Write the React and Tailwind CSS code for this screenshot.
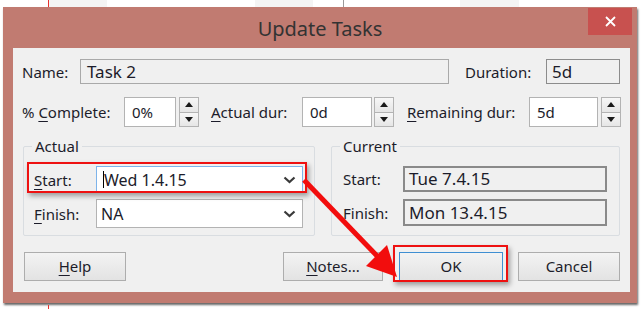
import React from "react";

const Label = ({ children, className = "" }) => (
  <span className={`text-[15px] leading-[20px] text-[#1c1c2a] whitespace-nowrap ${className}`}>
    {children}
  </span>
);

const Key = ({ children }) => (
  <span className="underline underline-offset-[3px] decoration-1">{children}</span>
);

const Spinner = ({ className = "" }) => (
  <div className={`w-[20px] h-[30px] flex flex-col border border-[#b3b3b3] ${className}`}>
    <div className="flex-1 flex items-center justify-center bg-gradient-to-b from-[#f7f7f7] to-[#e6e6e6] border-b border-[#b3b3b3]">
      <svg width="8" height="5" viewBox="0 0 8 5">
        <path d="M4 0L8 5H0z" fill="#1a1a1a" />
      </svg>
    </div>
    <div className="flex-1 flex items-center justify-center bg-gradient-to-b from-[#f7f7f7] to-[#e6e6e6]">
      <svg width="8" height="5" viewBox="0 0 8 5">
        <path d="M0 0H8L4 5z" fill="#1a1a1a" />
      </svg>
    </div>
  </div>
);

const Chevron = () => (
  <svg width="13" height="8" viewBox="0 0 13 8" className="mr-[6px]">
    <polyline points="1.5,1.5 6.5,6 11.5,1.5" fill="none" stroke="#3a3a3a" strokeWidth="2.2" />
  </svg>
);

const Button = ({ children, className = "" }) => (
  <div
    className={`h-[29px] flex items-center justify-center border bg-gradient-to-b from-[#f3f3f3] to-[#e3e3e3] text-[15px] text-[#1c1c2a] ${className}`}
  >
    {children}
  </div>
);

export default function App() {
  return (
    <div className="relative w-[644px] h-[310px] overflow-hidden bg-white font-['Noto_Sans',sans-serif]">
      {/* strip of the window behind */}
      <div className="flex h-[7px]">
        <div className="ml-[48px] w-[1px] bg-[#e8322d]" />
        <div className="w-[58px] bg-[#f4f4f4]" />
        <div className="ml-[148px] w-[58px] bg-[#f4f4f4]" />
        <div className="ml-[30px] w-[1px] bg-[#9a9a9a]" />
        <div className="ml-[116px] w-[59px] bg-[#f4f4f4]" />
      </div>

      {/* dialog */}
      <div className="ml-[3px] w-[634px] bg-[#c17b71] shadow-[1px_2px_2px_rgba(0,0,0,0.6)] pb-[11px]">
        <div className="h-[41px] grid grid-cols-[1fr_auto_1fr]">
          <div />
          <div className="self-center text-[20px] text-[#333] mt-[2px]">Update Tasks</div>
          <div className="flex justify-end items-start">
            <div className="mt-[1px] mr-[5px] w-[44px] h-[27px] bg-[#c8514f] flex items-center justify-center">
              <svg width="11" height="11" viewBox="0 0 11 11">
                <path d="M1 1L10 10M10 1L1 10" stroke="#fff" strokeWidth="1.8" />
              </svg>
            </div>
          </div>
        </div>

        <div className="ml-[10px] w-[617px] h-[244px] bg-[#f0f0f0] pt-[11px] flex flex-col">
          {/* name row */}
          <div className="flex items-center h-[25px]">
            <Label className="ml-[9px] w-[58px]">Name:</Label>
            <div className="w-[369px] h-[25px] border border-[#a9a9a9] flex items-center pl-[6px] text-[17px] text-[#1c1c2a]">
              Task 2
            </div>
            <Label className="ml-[16px] w-[81px]">Duration:</Label>
            <div className="w-[74px] h-[25px] border border-[#8c8c8c] flex items-center pl-[5px] text-[17px] text-[#1c1c2a]">
              5d
            </div>
          </div>

          {/* complete row */}
          <div className="mt-[13px] flex items-center h-[30px]">
            <Label className="ml-[9px] w-[102px]">
              % <Key>C</Key>omplete:
            </Label>
            <div className="w-[52px] h-[30px] border border-[#b3b3b3] bg-white flex items-center pl-[7px] text-[15px] text-[#1c1c2a]">
              0%
            </div>
            <Spinner className="ml-[3px]" />
            <Label className="ml-[12px] w-[91px]">
              <Key>A</Key>ctual dur:
            </Label>
            <div className="w-[70px] h-[30px] border border-[#b3b3b3] bg-white flex items-center pl-[7px] text-[15px] text-[#1c1c2a]">
              0d
            </div>
            <Spinner className="ml-[2px]" />
            <Label className="ml-[13px] w-[122px]">
              <Key>R</Key>emaining dur:
            </Label>
            <div className="w-[69px] h-[30px] border border-[#b3b3b3] bg-white flex items-center pl-[7px] text-[15px] text-[#1c1c2a]">
              5d
            </div>
            <Spinner className="ml-[3px]" />
          </div>

          {/* groups */}
          <div className="mt-[19px] flex">
            <div className="ml-[10px] w-[292px] h-[90px] border border-[#d9dde1] rounded-[2px] flex flex-col">
              <Label className="-mt-[11px] ml-[8px] px-[3px] w-fit bg-[#f0f0f0]">Actual</Label>
              <div className="mt-[10px] flex items-center h-[27px]">
                <Label className="ml-[10px] w-[62px]">
                  <Key>S</Key>tart:
                </Label>
                <div className="w-[207px] h-[27px] border border-[#7eb4ea] bg-white flex items-center justify-between pl-[6px] text-[16px] text-[#1c1c2a]">
                  <span className="flex items-center">
                    <span className="w-[1px] h-[17px] bg-black" />
                    Wed 1.4.15
                  </span>
                  <Chevron />
                </div>
              </div>
              <div className="mt-[6px] flex items-center h-[29px]">
                <Label className="ml-[10px] w-[62px]">
                  <Key>F</Key>inish:
                </Label>
                <div className="w-[207px] h-[29px] border border-[#b3b3b3] bg-white flex items-center justify-between pl-[4px] text-[16px] text-[#1c1c2a]">
                  NA
                  <Chevron />
                </div>
              </div>
            </div>

            <div className="ml-[16px] w-[289px] h-[90px] border border-[#d9dde1] rounded-[2px] flex flex-col">
              <Label className="-mt-[11px] ml-[8px] px-[3px] w-fit bg-[#f0f0f0]">Current</Label>
              <div className="mt-[10px] flex items-center h-[26px]">
                <Label className="ml-[11px] w-[60px]">Start:</Label>
                <div className="w-[204px] h-[26px] border-2 border-[#8a8a8a] flex items-center pl-[4px] text-[17px] text-[#1c1c2a]">
                  Tue 7.4.15
                </div>
              </div>
              <div className="mt-[7px] flex items-center h-[27px]">
                <Label className="ml-[11px] w-[60px]">Finish:</Label>
                <div className="w-[204px] h-[27px] border-2 border-[#8a8a8a] flex items-center pl-[4px] text-[17px] text-[#1c1c2a]">
                  Mon 13.4.15
                </div>
              </div>
            </div>
          </div>

          {/* buttons */}
          <div className="mt-[16px] flex">
            <Button className="ml-[11px] w-[102px] border-[#adadad]">
              <Key>H</Key>elp
            </Button>
            <Button className="ml-[157px] w-[100px] border-[#adadad]">
              <Key>N</Key>otes...
            </Button>
            <Button className="ml-[16px] w-[104px] border-[#3f8fd2]">OK</Button>
            <Button className="ml-[15px] w-[102px] border-[#adadad]">Cancel</Button>
          </div>
        </div>
      </div>

      <div className="flex">
        <div className="ml-[48px] mt-[2px] w-[1px] h-[4px] bg-[#e8322d]" />
      </div>

      {/* annotations */}
      <div className="absolute left-[27px] top-[162px] w-[280px] h-[31px] border-2 border-[#ee1111] shadow-[2px_3px_5px_rgba(0,0,0,0.35)]" />
      <div className="absolute left-[393px] top-[245px] w-[115px] h-[37px] border-2 border-[#ee1111] shadow-[2px_3px_5px_rgba(0,0,0,0.35)]" />
      <svg className="absolute left-0 top-0 pointer-events-none" width="644" height="310" viewBox="0 0 644 310">
        <line x1="304" y1="180" x2="380" y2="259" stroke="#f20d0d" strokeWidth="5" />
        <polygon points="397,277 366,266 387,245" fill="#f20d0d" />
      </svg>
    </div>
  );
}
